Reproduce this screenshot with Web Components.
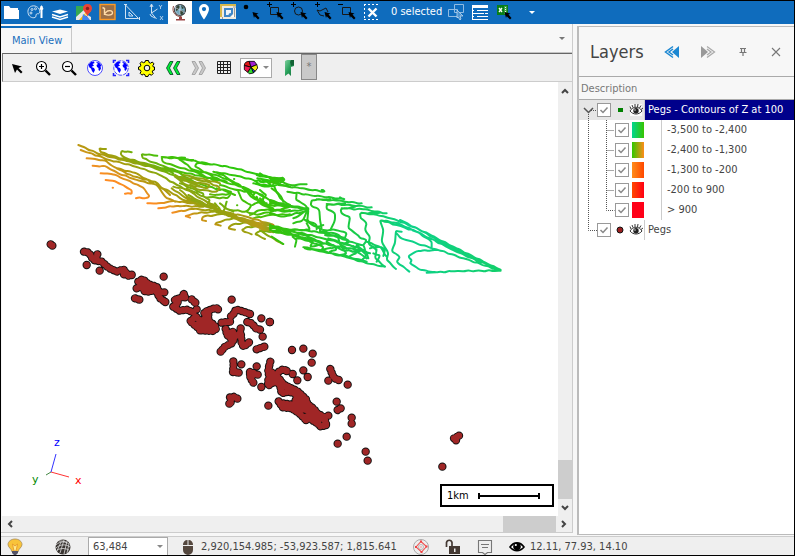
<!DOCTYPE html>
<html lang="en">
<head>
<meta charset="utf-8">
<title>Main View</title>
<style>
html,body{height:100%;margin:0}
body{font:11px/16px "DejaVu Sans Condensed","Noto Sans",sans-serif;color:#444;background:#f7f7f7;overflow:hidden}
</style>
</head>
<body>
<gis-app></gis-app>
<script>
const CURSOR='<path d="M12.500 12l6 1.500-2 1 3 3.500-1.500 1.500-3.300-3.300L14 18z"/>';
const PLUS='<path d="M3 4.500h5M5.500 2v5" stroke="#000"/>';
const LAND='<path fill="#00f" d="M5.500 9l2.500-3 3-.5.5 1.500-2 1 1.500 1.500-2.500 1.500 2.500 1 1 2-1.500 3-1.500-2-1-2.500-1.500-1zM13 6l3 .5 2.500 3-1 1 .5 2-1.500 2.500-1-1v-2l-1.500-1-.5-2 1.500-1z"/>';
const ICONS = {
folder:'<path fill="#fff" d="M4 6h5l1.500 2H18v2h1v9H4z"/>',
palette:'<g fill="none" stroke="#cfe2f3"><path d="M11 6C6 5 3.500 9 4 12.500c.5 4 4 6 7 5 1.500-.5.500-2.500 1.500-3.500.8-.8 2 .5 3-1C16.500 11 15 7 11 6z"/><circle cx="8" cy="9.500" r="1"/><circle cx="7" cy="13" r="1"/><circle cx="11.500" cy="8.800" r="1"/></g><path stroke="#fff" stroke-width="2" d="M17.500 6v12"/><path fill="#fff" d="M15.500 9l2-4 2 4-2 1.500z"/>',
layers:'<path fill="#fff" d="M4 11.500l8-2 8 2-8 2.500z"/><path d="M4 14.500l8 2.500 8-2.500M4 17l8 2.500 8-2.500" fill="none" stroke="#fff" stroke-width="1.400"/>',
gmap:'<path fill="#34a853" d="M4 6h12v6l-12 7z"/><path fill="#fbbc05" d="M4 20L16 8l3 3-9 9z"/><path fill="#e8e8e8" d="M4 17L14 8l2 2L7 20H4z"/><path fill="#4285f4" d="M11 14l8 6h-9z"/><path fill="#e8e8e8" d="M12 13l7 4v3h-1z"/><path fill="#ea4335" d="M15.500 4C12.500 4 11 6 11 8.500c0 3 3.500 4 4.500 8 1-4 4.500-5 4.500-8C20 6 18.500 4 15.500 4z"/><circle cx="15.500" cy="8.500" r="1.700" fill="#8b1c1c"/>',
bing:'<rect x="4" y="4.500" width="15" height="15" fill="#9a6f48" stroke="#ff9a22" stroke-width="1.400"/><path fill="none" stroke="#ffdca8" stroke-width="1.400" d="M6.500 7.500l2 1v4.500M8.500 13.500l3-2.500c3-1 5 0 5 1.800 0 3-8 3-8 .5z"/>',
tri:'<path d="M5.500 5v13.500h13zM9 12v4h4z" fill="none" stroke="#cfe2f3"/><path d="M4 4.500h3M19.500 17v3" stroke="#cfe2f3"/>',
axes:'<path d="M7.500 5v8l5 6M7.500 13l6-4M6 7l1.500-3L9 7M6 14l1 2 4 2" fill="none" stroke="#cfe2f3"/><path d="M15 5l1.500 2L18 5M16.500 7v2M16 16l3 4M19 16l-3 4" fill="none" stroke="#cfe2f3" stroke-width=".8"/>',
globe:'<circle cx="12" cy="10" r="5.500" fill="#74a9bd" stroke="#333" stroke-width="1.200"/><path fill="#343" d="M8 7l3-2 1 2-2 3-2 1zM13 5l3 3-2 1zM12 10l4 1-2 4-2-1z"/><path d="M6 7l12 6M12 4.500v11M8 6c-2 4 0 8 3 9" stroke="#dde" fill="none" stroke-width=".6"/><path d="M5.500 6c-2 6 2 11 8 10.500" fill="none" stroke="#8c4a40"/><path fill="#944" d="M11 17h3v2h3v1.500H8V19h3z"/>',
pin:'<path fill="#fff" fill-rule="evenodd" d="M12 4a5 5 0 0 0-5 5c0 4 5 10.500 5 10.500S17 13 17 9a5 5 0 0 0-5-5zm0 3a2 2 0 1 1 0 4.200A2 2 0 0 1 12 7z"/>',
mapedit:'<path fill="#eeeae0" d="M4 4h16v15H4z"/><path fill="#d8b84a" d="M4 4h16v2H4zM4 4h2v13H4z"/><path fill="#3f86c8" d="M8 8h9v6l-3 3H8z"/><path fill="#eef3f8" d="M10 10h5v3l-2 .5-.5 1.500H10z"/><path d="M6.500 17v2M17 7h3M18.500 8v9" stroke="#999" fill="none"/><path fill="#fff" d="M15 17l3-3v3z"/>',
selpt:'<circle cx="6" cy="7" r="2.300"/>'+CURSOR,
selrect:PLUS+'<path d="M6.500 7.500h8v7h-8z" fill="none" stroke="#181818"/>'+CURSOR,
selcirc:PLUS+'<circle cx="10.500" cy="11" r="4" fill="none" stroke="#181818"/>'+CURSOR,
selpoly:PLUS+'<path d="M5 10l3 1 6-3 2 4M5 10l3 5 4 1" fill="none" stroke="#181818"/>'+CURSOR,
seldel:'<path d="M2 4.500h5" stroke="#000"/><path d="M6.500 7.500h8v7h-8z" fill="none" stroke="#181818"/>'+CURSOR,
clear:'<path d="M4.500 4v16M4 4.500h16M4 19.500h16" fill="none" stroke="#fff" stroke-dasharray="2 2"/><path d="M8.500 8.500l8 8m0-8l-8 8" stroke="#fff" stroke-width="2.400"/>',
windows:'<g fill="none" stroke="#8fbbe2"><path d="M10.500 4.500h9v8h-9z"/><path d="M4.500 9.500h9v7h-9z"/></g><path d="M13 10l6 6-3 0 1 3-1 1-2-3-1 1z" fill="#4b92d0" stroke="#cfe2f3" stroke-width=".7"/>',
table:'<path fill="#fff" d="M4 5h16v3H4z"/><path d="M4.500 5v15M4 10.500h16M4 13.500h16M4 16.500h16M4 19.500h16" stroke="#fff"/><path d="M6 10.500h3M6 16.500h3" stroke="#0f6cbd"/><path d="M16.500 9v8" stroke="#0f6cbd" stroke-dasharray="1 1"/>',
excel:'<path fill="#087f16" d="M5 5h11v10H5z"/><path fill="#3ba044" d="M12 6h3v8h-3z"/><path d="M7 8l3 4m0-4l-3 4" stroke="#fff" stroke-width="1.300"/><path d="M13.500 7v6" stroke="#e8ffe8" stroke-dasharray="1 1"/>'+CURSOR,
caret:'<path fill="#fff" d="M9 11h6l-3 3z"/>',
arrow:'<path fill="#000" d="M7 8l10 2.500-3.500 1.500 4 4-1.500 1.500-4-4L10 17z"/>',
zin:'<circle cx="10.500" cy="10.500" r="5" fill="#fff" stroke="#000" stroke-width="1.100"/><path d="M8 10.500h5M10.500 8v5" stroke="#000" stroke-width="1.200"/><path d="M14.500 14.500l4.500 4.500" stroke="#000" stroke-width="2.400"/>',
zout:'<circle cx="10.500" cy="10.500" r="5" fill="#fff" stroke="#000" stroke-width="1.100"/><path d="M8 10.500h5" stroke="#000" stroke-width="1.200"/><path d="M14.500 14.500l4.500 4.500" stroke="#000" stroke-width="2.400"/>',
world:'<circle cx="12" cy="12" r="7.500" fill="#fff" stroke="#22f" stroke-width=".8"/>'+LAND,
extent:'<path d="M4.500 7V4.500H7M17 4.500h2.500V7M19.500 17v2.500H17M7 19.500H4.500V17" fill="none" stroke="#22f" stroke-width="1.600"/><circle cx="12" cy="12" r="7.200" fill="#fff" stroke="#22f" stroke-width=".8" stroke-dasharray="4 1"/>'+LAND,
gear:'<path d="M10.500 4.500h3l.5 2 1.500.7L17.300 6l1.700 1.900-1.200 1.700.5 1.400h1.200v3l-1.700.5-.5 1.400 1 1.500-1.900 1.900-1.600-1-1.300.6-.5 1.600h-2.500l-.5-1.700-1.400-.6-1.700.9-1.800-1.800.9-1.800-.6-1.400-1.900-.5v-2.600l1.900-.6.5-1.300-1-1.700L6.800 5.700l1.600 1 1.600-.6z" fill="#ff0" stroke="#000"/><circle cx="12" cy="12" r="2.800" fill="#eee" stroke="#000"/>',
prev:'<path fill="#0e3" stroke="#042" stroke-width=".8" d="M9 5.500h3L8.500 12l3.500 6.500H9L5.500 12zM16 5.500h3L15.500 12l3.500 6.500h-3L12.500 12z"/>',
next:'<path fill="#c8c8c8" stroke="#999" stroke-width=".8" d="M15 5.500h-3l3.500 6.500-3.500 6.500h3l3.500-6.500zM8 5.500H5L8.500 12 5 18.500h3l3.500-6.500z"/>',
grid:'<path fill="none" stroke="#222" d="M5.500 5.500h13v12h-13zM5 8.500h14M5 11.500h14M5 14.500h14M8.500 5v13M11.500 5v13M15.500 5v13"/>',
pie:'<g stroke="#000"><path fill="#24f" d="M12 11l6 3-3 4z"/><path fill="#e01818" d="M12 11L4 9c0-3 2-5 6-5z"/><path fill="#a020d0" d="M12 11l-2-7 6 0 3 4z"/><path fill="#ee1" d="M12 11l7-3 1 4-3 4z"/><path fill="#3d3" d="M12 11l3 7-5 1-2-2z"/><path fill="#f01850" d="M12 11l-4 6-4-3V9z"/></g>',
bookmark:'<defs><linearGradient id="bm" y1="0" x1="0" y2="1" x2="1"><stop stop-color="#7fcf9e"/><stop offset=".5" stop-color="#27a05a"/><stop offset="1" stop-color="#1b6b3c"/></linearGradient></defs><path fill="url(#bm)" d="M8 5l2-1h7v6l-3 1v9l-2.500-2.500L8 20z"/><path fill="#126235" d="M13 6l1-2h3v5l-3 1z"/>',
rew:'<path fill="#1b87d2" d="M19 6v12l-7-6z"/><path d="M13 6.500L5.500 12l7.500 5.500M13 9l-4 3 4 3" fill="none" stroke="#1b87d2" stroke-width="1.500"/>',
fwd:'<path fill="#999" d="M5 6v12l7-6z"/><path d="M11 6.500l7.500 5.500-7.500 5.500M11 9l4 3-4 3" fill="none" stroke="#aaa" stroke-width="1.300"/>',
tack:'<path d="M9 8.500h6M8.500 12.500h7M10.500 8v4M13.500 8v4M12 12v4" fill="none" stroke="#777" stroke-width="1.200"/>',
close:'<path d="M8 8l8 8m0-8l-8 8" stroke="#777" stroke-width="1.100"/>',
drop:'<path fill="#777" d="M9 10h6l-3 3z"/>',
up:'<path d="M9 14l3-3 3 3" fill="none" stroke="#444" stroke-width="2"/>',
down:'<path d="M9 10l3 3 3-3" fill="none" stroke="#444" stroke-width="2"/>',
left:'<path d="M14 9l-3 3 3 3" fill="none" stroke="#444" stroke-width="2"/>',
right:'<path d="M10 9l3 3-3 3" fill="none" stroke="#444" stroke-width="2"/>',
bulb:'<path d="M12 4c-4 0-7 2.500-7 5.500 0 3 3.500 4 4 7.500h6c.5-3.500 4-4.500 4-7.500C19 6.500 16 4 12 4z" fill="#f8c33a" stroke="#a58a5b" stroke-width=".8"/><path d="M9.500 9l1.500 7h2l1.500-7-2.500 2z" fill="#ffe98a" stroke="#e08a20" stroke-width=".7"/><path fill="#545468" d="M9 16h6v2l-2 2h-2l-2-2z"/>',
ball:'<circle cx="12" cy="12" r="7.500" fill="#3a3532"/><path d="M5 10c4-4 9-4 13-1M5 13c4-4 10-4 14-1M8 6c3 0 6 0 8 2M6 16l4-9M9 18l4-13M13 19l3-13M16 18l2-9M6 15c4-2 8-2 12 0" fill="none" stroke="#ddd" stroke-width=".8"/>',
mouse:'<path fill="#55483f" d="M7 11h10v4a5 5 0 0 1-10 0zM7 10a4.500 4.500 0 0 1 4.500-5v5zM12.500 5A4.500 4.500 0 0 1 17 10h-4.500z"/>',
target:'<circle cx="12" cy="12" r="7.500" fill="none" stroke="#aaa"/><circle cx="12" cy="12" r="2.500" fill="none" stroke="#bbb"/><path d="M12 6.500l5.500 5-5 5.500-5.500-5z" fill="none" stroke="#e55" stroke-width="1.100"/><path d="M11 5.500h2v2h-2zM16.500 10.500h2v2h-2zM6 11h2v2H6zM11.500 16h2v2h-2zM11.500 11.500h1v1h-1z" fill="#e44"/>',
lock:'<path d="M5.500 12V7.500a2.800 2.800 0 0 1 5.500 0V12" fill="none" stroke="#443933" stroke-width="1.700"/><path fill="#443933" d="M8 11h11v8H8z"/><path fill="#eee" d="M13 13.500h1.500V17H13z"/>',
note:'<path d="M5.500 5.500h13v12h-4l-2.500 2-2.500-2h-4z" fill="none" stroke="#777" stroke-width="1.100"/><path d="M8 9.500h8M9 12.500h6" stroke="#777"/>',
eye:'<path d="M5 12c4-5.500 10-5.500 14 0-4 5-10 5-14 0z" fill="#fff" stroke="#000" stroke-width="1.600"/><circle cx="12" cy="11.500" r="3.800"/><circle cx="10.800" cy="10" r="1.100" fill="#fff"/>',
lash:'<rect x="6" y="6" width="12" height="12" fill="#fff" opacity=".8"/><path d="M6 13c3-5 9-5 12 0-3 4-9 4-12 0z" fill="#fff" stroke="#333"/><circle cx="12" cy="12.700" r="2.700" fill="#222"/><path d="M7 11L6 8.500M9 9.500L8 7M11 9V6M13.500 9L14 6M15.500 10L17 7.500M17 11.500l2-1.500" stroke="#222" stroke-width=".9"/><circle cx="11" cy="12" r=".7" fill="#fff"/>',
gsq:'<path fill="#008000" d="M10 10h5v4h-5z"/>',
rdot:'<circle cx="12" cy="12" r="3" fill="#9b2020" stroke="#111"/>'
};
const define=(name,css,html,init)=>customElements.define(name,class extends HTMLElement{
  constructor(){super();const r=this.attachShadow({mode:'open'});const t=document.createElement('template');
    t.innerHTML=`<style>*{box-sizing:border-box}button{font:inherit;color:inherit;border:0;background:none;padding:0;margin:0}${css}</style>${html}`;
    r.append(t.content.cloneNode(true));}
  connectedCallback(){if(!this.ready){this.ready=true;init&&init(this,this.shadowRoot);}}
});
const buttons=(list)=>list.map(([n,l])=>`<tool-button icon="${n}" label="${l}"></tool-button>`).join('');

define('gs-icon',':host{display:block;width:24px;height:24px;flex:none}svg{display:block;width:100%;height:100%}','<svg viewBox="0 0 24 24" preserveAspectRatio="xMidYMid slice" aria-hidden="true"></svg>',(h,r)=>{
  r.querySelector('svg').innerHTML=ICONS[h.getAttribute('name')];});

define('tool-button',':host{display:block;flex:none}button{display:flex;align-items:center;justify-content:center;width:100%;height:100%}:host([active]){background:#fff}',
 '<button type="button"></button>',(h,r)=>{
  const b=r.querySelector('button');b.setAttribute('aria-label',h.getAttribute('label'));
  b.innerHTML=`<gs-icon name="${h.getAttribute('icon')}"></gs-icon>`;});

define('main-toolbar',`:host{display:flex;height:24px;background:#0f6cbd;color:#fff;align-items:stretch}tool-button{width:24px}span{width:60px;padding-left:7px;line-height:24px;white-space:nowrap}tool-button[icon=caret]{margin-left:4px}`,
 buttons([['folder','Open'],['palette','Style'],['layers','Layers'],['gmap','Google map'],['bing','Bing'],['tri','Measure'],['axes','Axes']])+
 '<tool-button icon="globe" label="Globe" active></tool-button>'+
 buttons([['pin','Place'],['mapedit','Map'],['selpt','Select point'],['selrect','Select rectangle'],['selcirc','Select circle'],['selpoly','Select polygon'],['seldel','Deselect'],['clear','Clear selection']])+
 '<span>0 selected</span>'+buttons([['windows','Zoom to selected'],['table','Table'],['excel','Export to Excel'],['caret','More']]));

define('view-tabs',`:host{display:flex;height:29px;padding:2px 0 0 1px;justify-content:space-between;border-bottom:1px solid #c4c4c4}
 .tab{height:27px;padding:0 9px 0 11px;line-height:23px;color:#1a6fbd;border-top:2px solid #0f6cbd;border-right:1px solid #c8c8c8;background:#f7f7f7}tool-button{height:26px;width:20px}`,
 '<button type="button" class="tab">Main View</button><tool-button icon="drop" label="Views"></tool-button>');

define('view-toolbar',`:host{display:flex;align-items:stretch;height:29px;margin-left:2px;background:#efefef;border-top:1px solid #666;border-left:1px solid #777;border-bottom:1px solid #ccc;padding-left:1px}
 tool-button{width:26px}.pie{display:flex;align-items:center;width:32px;height:20px;margin:4px 4px 0 4px;background:#fff;border:1px solid #aaa}.pie gs-icon{width:20px;height:20px}.pie svg{margin-left:2px}
 tool-button:nth-of-type(9){width:24px}tool-button[icon=bookmark]{width:25px}
 .star{width:16px;height:26px;background:#c9c9c9;border:1px solid #888;color:#777}`,
 buttons([['arrow','Pointer'],['zin','Zoom in'],['zout','Zoom out'],['world','World'],['extent','Extent'],['gear','Settings'],['prev','Previous'],['next','Next'],['grid','Grid']])+
 '<button type="button" class="pie" aria-label="Colours"><gs-icon name="pie"></gs-icon><svg width="6" height="4"><path fill="#888" d="M0 0h6L3 3z"/></svg></button><tool-button icon="bookmark" label="Bookmark"></tool-button><button type="button" class="star">*</button>');

define('scroll-bar',`:host{display:flex;background:#efefef;justify-content:space-between}:host([vertical]){flex-direction:column}
 ::slotted(tool-button){width:16px;height:16px}:host([vertical]) ::slotted(tool-button){width:14px;height:17px}
 .track{flex:1;display:flex;justify-content:flex-end}:host([vertical]) .track{flex-direction:column}
 .thumb{background:#cdcdcd;width:53px}:host([vertical]) .thumb{width:auto;height:39px}`,
 '<slot></slot><div class="track"><div class="thumb"></div></div><slot name="end"></slot>');

/* Points are stored at three units per pixel, relative to each cluster's origin. */
const PEGS=[
 {o:[40,235],d:'32,28 37,32|132,50 147,53 160,75 185,80 205,98 230,110 250,103 265,122 275,119|172,58 168,72|140,90|179,107|252,118 275,120|371,125|295,140 308,132 325,148 350,155 358,172 373,172|290,160 310,150 310,168 330,170 345,162 360,190 376,201|300,145 330,165|285,190 298,194|405,195 425,187 432,176 435,187|400,215 415,205 408,193|455,193 466,203|400,215 418,227 440,224 460,232|470,223|452,258 468,245 485,262 498,245 492,232 510,225 528,218 534,223|455,262 480,284 490,270 502,255 520,268 530,280 520,288 480,286|505,240 505,285|470,270 510,275|575,194|545,263 570,260|573,244 585,232 587,223 608,229 630,237|622,261 635,265 648,280 660,284|668,305|664,250|690,261|557,282 562,302 577,288 585,302 600,298 602,280|575,300 585,308 575,325 555,335 542,350|603,300 605,325 611,335 627,322|650,343 673,335|565,298 575,315'},
 {o:[200,320],d:'209,6|100,124 101,140 98,156 116,158|124,133|170,139|150,156 165,160 150,172 160,188|150,162 173,164|184,201|205,180 204,198 218,188|211,125 207,140|205,152 220,160 237,175 250,193 270,203 290,212 305,225 320,240 322,252 340,265 352,280 370,290 378,312|205,152 207,166 225,183 240,195 245,220 265,215 285,220|236,244 248,262 275,265 298,280 318,300|237,155 250,147 260,153|278,162|292,181|228,165 240,185 270,215|282,214 300,240 300,268 322,270 340,290 362,320 378,315|290,230 283,255 265,256|310,250 355,302|250,250 290,256|320,290 355,312|350,280 375,302|300,225 320,255 305,262|205,257|276,90|310,86|338,101|335,128|310,151|323,171|391,147 397,163 402,174 416,180|385,182|443,194|410,245|413,270 422,265|385,287|455,293|455,311|440,350|413,371|497,395|503,422|90,232 103,230 112,236|92,247 93,237|88,251'},
 {o:[430,420],d:'72,55 87,47|78,61|37,140'}
];
const LEFT=`55,30 120,58 200,78 280,98 340,120 430,150 480,165|62,45 150,75 230,95 300,120 350,150 400,175|80,70 130,75 170,100 230,115 270,140 330,170 370,195 440,215|98,92 140,95 175,115 230,135 290,150 320,190 345,200|122,115 160,118 200,135 250,158 268,182 262,188 228,190|137,135 165,138 190,150 215,165 215,177 195,176|158,158 159,158|262,205 300,204 345,198 420,208|170,100 220,125 285,140 330,180|295,220 350,212 430,215|337,233 400,222 470,228|390,248 375,243 400,235 470,230|438,258 425,255 430,245 490,237|482,272 465,268 470,262 520,250|525,284 505,280 515,270 560,262|575,298 545,285 560,275 600,275|615,312 585,298 600,288 640,290|668,327 630,305 600,285|138,42 118,40 122,52 200,75 290,95 340,115|215,52 185,47 182,58 200,70 270,90 350,110 400,140|292,62 245,57 248,70 300,90 360,110 430,125 500,140|375,68 305,66 308,80 350,95 410,112 470,140|400,75 355,72 375,85 400,105 470,120 540,150 580,190 620,205|305,66 370,72 440,85 520,98 580,115 640,130 672,133|450,88 410,85 405,95 440,115 490,140 560,160 590,195 640,225 690,225|460,110 490,120 530,148 570,165 600,180 660,210 690,210|470,112 520,120 580,135 600,150 640,150|580,145 620,155 650,150 672,135 600,120|600,140 640,140 660,150 690,155|640,150 660,190 690,210|600,165 620,180 600,200 640,220|578,210 610,195 610,180 585,170 580,180|340,155 390,165 450,195 440,215|360,145 430,175 430,185 500,190 510,180|470,160 515,170 500,180 450,178|535,170 545,195 575,210 560,230 510,225|570,240 600,225 660,225 690,215|580,250 630,240 690,238|560,230 590,240 640,228|500,200 495,220 520,230|465,205 480,220 475,232|480,205 495,220 490,230|450,205 467,218 460,230|531,211 532,211|522,132 523,132|360,165 390,190 430,205|335,160 380,190 420,210 480,225|600,190 620,210 690,214|590,120 630,128 670,140 670,130|592,130 650,140|590,185 600,205 620,215|585,138 615,138 630,148|600,115 640,135 668,128|480,150 530,165 575,172|490,165 525,180`;
const BAND=`345,125 390,130 440,140 480,158 470,170 420,165 370,145 345,125|360,135 400,140 450,150 440,160 390,150|370,120 420,130 480,145|345,120 380,138 430,158|395,195 450,215 500,232 560,245 640,270|430,210 500,235 570,265 640,292|470,232 530,248 600,265 640,272|470,228 530,252 600,280 640,290|500,235 560,255 620,270|510,242 570,262 630,280|520,245 580,268 630,286|540,255 600,270 635,272|380,160 420,190 470,215|385,180 430,205 460,215`;
const RIGHT=`0,25 30,25 45,30 10,40|0,38 25,30 40,35|5,55 30,75 40,95|25,30 60,45 110,43|25,45 90,55 165,65 155,60|52,65 120,75 225,88 210,82|140,88 200,92 275,100|170,102 240,105 305,112|215,115 280,118 350,130|275,128 340,138 380,150 450,180 530,225 600,260 692,302|390,150 480,195 560,235 640,275 692,300|385,160 460,195 550,240 620,272 690,298|80,68 78,90 105,105 115,120 112,150 135,170 160,165|180,88 125,90 122,105 148,120 150,150 155,178|225,100 170,105 170,118 195,130 195,150 182,178|255,110 212,118 215,130 240,140 235,175 262,195 270,205 290,210 280,225|330,128 270,130 272,145 290,160 285,180 300,200 295,220 320,240 315,265 345,290|385,160 330,150 340,180 335,215 355,250 350,270 378,297|395,185 378,182 375,220 365,245 390,260 380,275 418,305|380,190 390,203 440,220 500,238 580,265 690,302|335,152 380,165 440,185 485,215 485,232|500,240 440,243 415,258 425,270 420,280 450,300 500,307 560,303 692,302|470,308 500,307|75,230 80,210 68,200|40,222 5,200|0,90 50,105 110,115|0,95 55,108 115,118|0,100 60,110 115,115|0,120 50,125 110,118|0,130 40,140 100,125|70,145 90,135 110,120|70,160 100,150 110,125|0,165 60,180 120,180 110,160|105,150 125,165 150,175 150,185|110,150 140,165 140,178|0,170 70,185 130,205 160,220|0,180 60,190 120,210 200,230 270,240|0,175 100,180 170,190 230,210|10,185 90,200 150,215|20,178 90,188 160,205 240,225 300,250|160,180 200,180 230,190 225,205 180,195|150,185 195,190 240,215 220,220 175,205|165,195 215,200 235,215 280,225 285,240|180,210 230,225 260,230 290,245 295,265|170,215 215,240 260,245 290,265|80,205 130,215 120,230 170,220|120,215 160,230 155,240 200,230|100,232 150,240 190,250 240,262 290,275|105,235 160,245 230,262 300,282 345,290|190,225 200,240 180,245|215,230 230,250 210,255|250,228 260,250 240,258|270,235 290,255 275,270|300,235 330,230 345,240 340,258|300,225 320,240|205,205 210,225 230,235|260,225 280,240 250,245|290,215 330,230 350,260|310,250 330,255 320,275`;
const points=l=>l.split(' ').map(q=>q.split(',').map(Number));
const dots=s=>s.split('|').map(l=>{const p=points(l),e=p[p.length-1];return(p.length>1?'M'+p.join('L'):'')+`M${e}h.1`;}).join('');
const contour=s=>s.split('|').map((l,k)=>{
  let p=points(l);
  if(p.length>2){const n=[p[0]];for(let i=1;i<p.length;i++){const a=p[i-1],b=p[i],len=Math.hypot(b[0]-a[0],b[1]-a[1]),m=Math.max(2,Math.round(len/12));
    for(let j=1;j<=m;j++){const t=j/m,w=j===m?0:2.4*Math.sin(i*7.3+j*2.4+k*3.1);n.push([a[0]+(b[0]-a[0])*t,a[1]+(b[1]-a[1])*t+w]);}}p=n;}
  let d=`M${p[0]}`;
  for(let i=1;i<p.length-1;i++)d+=`Q${p[i]} ${(p[i][0]+p[i+1][0])/2},${(p[i][1]+p[i+1][1])/2}`;
  return d+`L${p[p.length-1]}`;}).join('');
define('map-scene',`:host{display:block;position:relative;background:#fff;overflow:hidden;min-width:0;min-height:0}.world{position:absolute;inset:0;width:100%;height:100%}
 .axes{position:absolute;left:28px;bottom:25px;font:11px "DejaVu Sans",sans-serif}
 .scale{position:absolute;right:4px;bottom:9px;width:114px;height:23px;border:2px solid #000;background:#fff;display:flex;align-items:center;gap:9px;padding-left:5px;color:#000}`,
 `<svg class="world" role="img" aria-label="Contours and pegs"></svg>
 <svg class="axes" width="56" height="56"><path d="M21 37l18 5" stroke="#f33"/><path d="M21 37l5-18" stroke="#33f"/><path d="M21 37l-5 3" stroke="#484"/><text x="24" y="11" fill="#00f">z</text><text x="2" y="48" fill="#080">y</text><text x="45" y="49" fill="#f00">x</text></svg>
 <div class="scale"><span>1km</span><svg width="62" height="8"><path d="M1 4h60M1 1v6M61 1v6" stroke="#000" stroke-width="2"/></svg></div>`,
 (h,r)=>{
  const pegs=PEGS.map(g=>`<g transform="translate(${g.o}) scale(.3333)"><path d="${dots(g.d)}"/></g>`).join('');
  r.querySelector('.world').innerHTML=`<defs>
  <linearGradient id="l" gradientUnits="userSpaceOnUse" x1="180" y1="150" x2="287" y2="-35"><stop stop-color="#ff8c22"/><stop offset=".1" stop-color="#e29220"/><stop offset=".22" stop-color="#b3990f"/><stop offset=".42" stop-color="#85a80e"/><stop offset=".62" stop-color="#46c008"/><stop offset="1" stop-color="#2cc80c"/></linearGradient>
  <linearGradient id="b" gradientUnits="userSpaceOnUse" x1="340" y1="0" x2="650" y2="0"><stop stop-color="#86a810"/><stop offset=".5" stop-color="#98a010"/><stop offset=".85" stop-color="#b89a18"/><stop offset="1" stop-color="#7aa818"/></linearGradient>
  <linearGradient id="r" gradientUnits="userSpaceOnUse" x1="0" y1="0" x2="692" y2="0"><stop stop-color="#38c008"/><stop offset=".25" stop-color="#22c82c"/><stop offset=".42" stop-color="#14cd5a"/><stop offset=".6" stop-color="#0dd28a"/><stop offset="1" stop-color="#12cf6a"/></linearGradient></defs>
  <g transform="translate(-2 -82)"><g fill="none" stroke-linecap="round" stroke-linejoin="round" stroke-width="6">
  <g transform="translate(60 135) scale(.3333)"><path stroke="url(#l)" d="${contour(LEFT)}"/><path stroke="url(#b)" d="${contour(BAND)}"/><path stroke="#e07a18" stroke-width="9" d="M634 271h4"/></g>
  <g transform="translate(270 170) scale(.3333)"><path stroke="url(#r)" d="${contour(RIGHT)}"/></g></g>
  <g fill="none" stroke-linecap="round" stroke-linejoin="round" stroke-dasharray=".1 11"><g stroke="#111" stroke-width="25">${pegs}</g><g stroke="#a02626" stroke-width="19">${pegs}</g></g></g>`;});

define('map-view',`:host{display:grid;grid-template-rows:auto auto 1fr auto;min-width:0;min-height:0;margin-bottom:2px;border-right:1px solid #ccc;border-bottom:1px solid #ccc}
 .mid{display:grid;grid-template-columns:1fr 14px;margin-left:2px;min-height:0}scroll-bar.h{height:16px;margin-left:2px}`,
 `<view-tabs></view-tabs><view-toolbar></view-toolbar><div class="mid"><map-scene></map-scene><scroll-bar vertical><tool-button icon="up" label="Scroll up"></tool-button><tool-button slot="end" icon="down" label="Scroll down"></tool-button></scroll-bar></div>
 <scroll-bar class="h"><tool-button icon="left" label="Scroll left"></tool-button><tool-button slot="end" icon="right" label="Scroll right"></tool-button></scroll-bar>`);

define('layer-row',`:host{display:flex;height:20px;align-items:stretch}
 .pre{display:flex;align-items:center;flex:none;width:66px;padding-left:4px;border-right:1px solid #ccc}
 :host([child]) .pre{width:83px}
 .tw,.br{flex:none;width:14px;height:20px}.br{width:18px;display:none}:host([child]) .br{display:block}
 svg{display:block}label{display:flex;flex:1;align-items:center;padding-left:3px;line-height:20px;white-space:nowrap}
 input{appearance:none;flex:none;margin:0;width:14px;height:14px;border:1px solid #999;background:#fff url("data:image/svg+xml,%3Csvg xmlns='http://www.w3.org/2000/svg' viewBox='0 0 12 12'%3E%3Cpath d='M2.500 6l2.500 2.500 4.500-5' fill='none' stroke='%23888' stroke-width='1.500'/%3E%3C/svg%3E")}
 .sw{display:none;width:12px;height:16px;margin-left:3px;background:var(--ramp)}:host([child]) .sw{display:block}
 .ic{display:flex;padding-left:1px}:host([child]) label{padding-left:5px}
 .ic gs-icon{width:16px;height:24px}
 :host([selected]) .pre{background:#e6e6e6}:host([selected]) label{background:#00008b;color:#fff}`,
 `<div class="pre"><svg class="tw" viewBox="0 0 14 20"></svg><svg class="br" viewBox="0 0 18 20"></svg><input type="checkbox" checked id="c"><span class="sw"></span><span class="ic"></span></div><label for="c"><slot></slot></label>`,
 (h,r)=>{
  const line='fill="none" stroke="#555" stroke-dasharray="1 1"',k=h.getAttribute('pos');
  const tw={first:`<path ${line} d="M5.500 14v6M8 10.500h6"/><path d="M1 8l4.500 4.500 4.500-4.500" fill="none" stroke="#555" stroke-width="1.500"/>`,child:`<path ${line} d="M5.500 0v20"/>`,end:`<path ${line} d="M5.500 0v20"/>`,last:`<path ${line} d="M5.500 0v10.500h8.500"/>`};
  r.querySelector('.tw').innerHTML=tw[k];
  r.querySelector('.br').innerHTML=k==='child'?`<path ${line} d="M9.500 0v20M9.500 10.500h8"/>`:`<path ${line} d="M9.500 0v10.500h8"/>`;
  const n=h.getAttribute('symbol');if(n)r.querySelector('.ic').innerHTML=`<gs-icon name="${n}"></gs-icon><gs-icon name="lash"></gs-icon>`;
  if(h.hasAttribute('ramp'))h.style.setProperty('--ramp',h.getAttribute('ramp'));});

define('layers-panel',`:host{display:flex;flex-direction:column;margin-top:2px;background:#f7f7f7;border:1px solid #bbb;border-left-width:2px;min-height:0}
 header{display:flex;height:49px;align-items:center;padding:0 2px 0 11px}h2{flex:1;margin:0;font-size:18px;line-height:24px;font-weight:400;color:#444}tool-button{width:36px;height:24px}tool-button:nth-of-type(n+3){width:33px}
 .head{height:24px;line-height:23px;border-top:1px solid #aaa;border-bottom:1px solid #aaa;padding-left:2px;color:#777}.tree{flex:1;background:#fff;color:#444}`,
 `<header><h2>Layers</h2>${buttons([['rew','Back'],['fwd','Forward'],['tack','Pin'],['close','Close']])}</header><div class="head">Description</div>
 <div class="tree"><layer-row pos="first" selected symbol="gsq">Pegs - Contours of Z at 100</layer-row>
 <layer-row child pos="child" ramp="linear-gradient(90deg,#00d68f,#38c400)">-3,500 to -2,400</layer-row>
 <layer-row child pos="child" ramp="linear-gradient(90deg,#30c800,#ff8c1a)">-2,400 to -1,300</layer-row>
 <layer-row child pos="child" ramp="linear-gradient(90deg,#ff8c1a,#ff4800)">-1,300 to -200</layer-row>
 <layer-row child pos="child" ramp="linear-gradient(90deg,#ff4800,#ff0014)">-200 to 900</layer-row>
 <layer-row child pos="end" ramp="#ff0018">&gt; 900</layer-row>
 <layer-row pos="last" symbol="rdot">Pegs</layer-row></div>`);

define('status-bar',`:host{display:flex;height:20px;align-items:center;background:#efefef;border-top:1px solid #ccc;padding-left:3px;white-space:nowrap}
 gs-icon{height:24px}select{appearance:none;height:20px;width:80px;margin:0 8px 0 13px;padding:0 4px;border:1px solid #aaa;border-radius:0;font:inherit;color:#444;background:#fff url("data:image/svg+xml,%3Csvg xmlns='http://www.w3.org/2000/svg' width='6' height='4'%3E%3Cpath fill='%23888' d='M0 0h6L3 3z'/%3E%3C/svg%3E") no-repeat right 4px center}
 .ball{margin-left:24px}.g{margin-left:12px}.g2{margin-left:8px}.t{padding-left:1px}`,
 `<gs-icon name="bulb"></gs-icon><gs-icon class="ball" name="ball"></gs-icon><select aria-label="Scale"><option>63,484</option></select><gs-icon name="mouse"></gs-icon><span class="t">2,920,154.985; -53,923.587; 1,815.641</span><gs-icon class="g" name="target"></gs-icon><gs-icon class="g2" name="lock"></gs-icon><gs-icon class="g2" name="note"></gs-icon><gs-icon class="g2" name="eye"></gs-icon><span class="t">12.11, 77.93, 14.10</span>`);

define('gis-app',`:host{display:grid;grid-template-rows:auto 1fr auto;height:100vh;background:#f7f7f7}
 main{display:grid;grid-template-columns:1fr 218px;column-gap:4px;min-height:0;padding-bottom:1px}.frame{position:fixed;inset:0;border:1px solid #000;pointer-events:none}`,
 `<main-toolbar></main-toolbar><main><map-view></map-view><layers-panel></layers-panel></main><status-bar></status-bar><div class="frame"></div>`);
</script>
</body>
</html>
